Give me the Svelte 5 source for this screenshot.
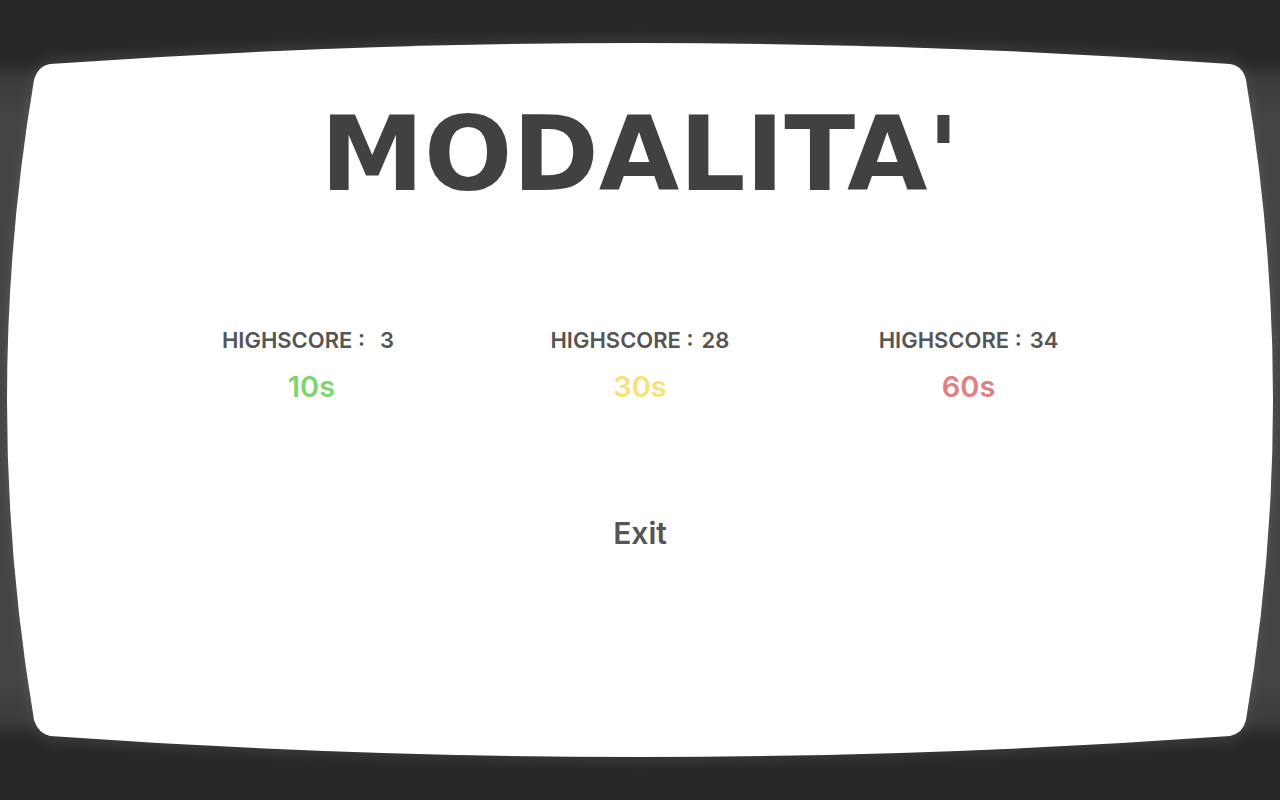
<script>
  const modes = [
    { seconds: 10, score: 3, color: "green" },
    { seconds: 30, score: 28, color: "yellow" },
    { seconds: 60, score: 34, color: "red" },
  ];
</script>

<main>
  <!-- curved CRT screen, stretched to the window -->
  <svg class="tube" viewBox="0 0 1280 800" preserveAspectRatio="none" aria-hidden="true">
    <defs>
      <filter id="glow" x="-10%" y="-10%" width="120%" height="120%">
        <feGaussianBlur stdDeviation="6 10" />
      </filter>
      <path
        id="screen"
        d="M50 64 Q640 22 1230 64 Q1243 66 1246 80 Q1300 400 1246 720 Q1243 733 1230 736 Q640 778 50 736 Q38 733 34 720 Q-20 400 34 80 Q38 66 50 64 Z"
      />
    </defs>
    <use href="#screen" fill="#777" opacity="0.4" filter="url(#glow)" />
    <use href="#screen" fill="#fff" />
  </svg>

  <h1>MODALITA'</h1>

  <section class="modes">
    {#each modes as { seconds, score, color }}
      <div class="mode">
        <p>
          <span>HIGHSCORE :</span>
          <span class="score">{score}</span>
        </p>
        <button class={color}>{seconds}s</button>
      </div>
    {/each}
  </section>

  <button class="exit">Exit</button>
</main>

<style>
  :global(body) {
    margin: 0;
    background: #262626;
  }
  main {
    position: relative;
    box-sizing: border-box;
    min-height: 100vh;
    padding: 90px 0;
    overflow: hidden;
    display: flex;
    flex-direction: column;
    align-items: center;
    font-family: Inter, "Open Sans", sans-serif;
    color: #555;
    background: linear-gradient(
      #262626 6%,
      #2a2a2a 8%,
      #3c3c3c 10%,
      #444 14%,
      #444 86%,
      #3c3c3c 90%,
      #2a2a2a 92%,
      #262626 94%
    );
  }
  .tube {
    position: absolute;
    inset: 0;
    width: 100%;
    height: 100%;
  }
  h1,
  .modes,
  .exit {
    position: relative;
  }
  h1 {
    margin: 0;
    font-family: "DejaVu Sans", Inter, sans-serif;
    font-size: 104px;
    line-height: 128px;
    font-weight: 700;
    color: #414141;
  }
  .modes {
    display: grid;
    grid-template-columns: repeat(3, 1fr);
    width: 77%;
    margin-top: 106px;
  }
  .mode {
    display: flex;
    flex-direction: column;
    align-items: center;
    gap: 11px;
  }
  p {
    display: flex;
    gap: 8px;
    margin: 0;
    font-size: 22px;
    line-height: 32px;
    font-weight: 600;
    white-space: nowrap;
  }
  .score {
    min-width: 28px;
    text-align: center;
  }
  button {
    padding: 0 8px;
    border: 0;
    background: none;
    font-family: inherit;
    font-size: 29px;
    line-height: 40px;
    font-weight: 600;
    color: inherit;
    cursor: pointer;
  }
  .green {
    color: #7dd66f;
  }
  .yellow {
    color: #f8e277;
  }
  .red {
    color: #e08080;
  }
  .exit {
    margin-top: 106px;
    font-size: 30px;
  }
</style>
